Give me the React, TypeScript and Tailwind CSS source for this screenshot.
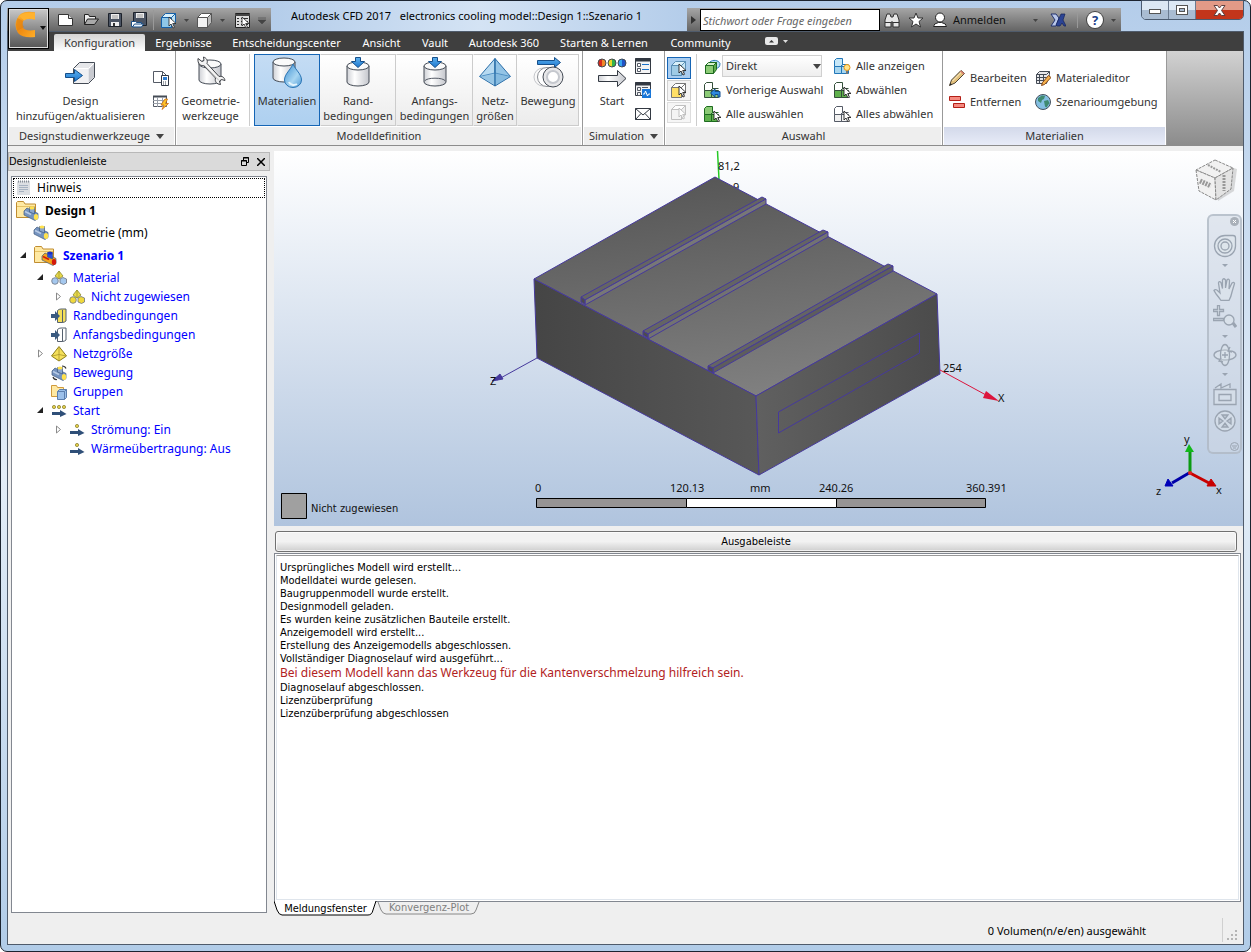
import { ReactNode, useState } from 'react';

type IconProps = { children: ReactNode; w?: number; h?: number };

function Icon({ children, w = 16, h = 16 }: IconProps) {
  return (
    <svg width={w} height={h} viewBox={`0 0 ${w} ${h}`} fill="none" aria-hidden="true" className="shrink-0">
      {children}
    </svg>
  );
}

function Caret({ className = 'text-[#444]' }: { className?: string }) {
  return (
    <svg width="8" height="5" viewBox="0 0 8 5" className={`shrink-0 ${className}`} aria-hidden="true">
      <path d="M0 0h8L4 5z" fill="currentColor" />
    </svg>
  );
}

const cursor = 'M0 0v9l2-2 2 4 1.500-.7-1.800-3.800H7z';

/* ---------- Quick access icons ---------- */

const NewIcon = () => (
  <Icon w={18}>
    <path d="M1.500 2.500h10l4 4v7h-14z" fill="#fff" stroke="#333" />
    <path d="M11.500 2.500v4h4" fill="#ddd" stroke="#333" />
  </Icon>
);

const OpenIcon = () => (
  <Icon>
    <path d="M1.500 12.500v-10h4l1 2h6v3" fill="#eee" stroke="#222" />
    <path d="M1.500 12.500l3-5.500h11l-4 5.500z" fill="#aaa" stroke="#222" />
  </Icon>
);

const SaveIcon = () => (
  <Icon>
    <path d="M1.500 1.500h13v13h-13z" fill="#4b5463" stroke="#1d222b" />
    <path d="M4 2h8v5H4zM4 10h8v4H4z" fill="#eee" />
    <path d="M5 4h6M5 6h6" stroke="#999" />
    <path d="M6 11h2v3H6z" fill="#333" />
  </Icon>
);

const SaveAsIcon = () => (
  <Icon>
    <path d="M2.500.500h13v13h-13z" fill="#4b5463" stroke="#1d222b" />
    <path d="M5 1h8v5H5z" fill="#eee" />
    <path d="M6 3h6M6 5h6" stroke="#999" />
    <path d="M.500 14.500v-5h4l1 1h5v4z" fill="#fff" stroke="#1b4f86" />
    <path d="M1.500 15l2-3h9l-2 3z" fill="#e8f2fb" stroke="#1b4f86" />
  </Icon>
);

function CubeShape({ front, side, top, line }: { front: string; side: string; top: string; line: string }) {
  return (
    <g stroke={line} strokeLinejoin="round">
      <path d="M1.500 5.500h10v10h-10z" fill={front} />
      <path d="M1.500 5.500l4-4h10l-4 4z" fill={top} />
      <path d="M11.500 5.500l4-4v9l-4 5z" fill={side} />
    </g>
  );
}

const BlueCubeIcon = () => (
  <Icon w={17} h={17}>
    <CubeShape front="#8fc7e8" side="#bfe2f4" top="#d8f0fb" line="#1560a8" />
    <path d={cursor} transform="translate(9 5)" fill="#fff" stroke="#222" strokeWidth=".8" />
  </Icon>
);

const WhiteCubeIcon = () => (
  <Icon w={17} h={17}>
    <CubeShape front="#f2f2f2" side="#bbb" top="#fff" line="#555" />
  </Icon>
);

const TableCursorIcon = () => (
  <Icon w={17} h={17}>
    <path d="M1.500 1.500h14v14h-14z" fill="#ddd" stroke="#222" />
    <path d="M1 3h15" stroke="#444" strokeWidth="2" />
    <path d="M3 6.500h2M3 9.500h2M3 12.500h2M7 6.500h7M7 9.500h7M7 12.500h7" stroke="#333" />
    <path d={cursor} transform="translate(8 5)" fill="#fff" stroke="#222" strokeWidth=".8" />
  </Icon>
);

/* ---------- Ribbon: large icons ---------- */

function Cylinder({ x = 0, y = 0, w = 22, h = 24 }: { x?: number; y?: number; w?: number; h?: number }) {
  const r = w / 2;
  return (
    <g transform={`translate(${x} ${y})`} stroke="#444b55">
      <path d={`M0 4v${h - 8}a${r} 4 0 0 0 ${w} 0V4`} fill="url(#steel)" />
      <ellipse cx={r} cy="4" rx={r} ry="4" fill="#fafafa" />
    </g>
  );
}

const Gradients = () => (
  <svg width="0" height="0" className="absolute" aria-hidden="true">
    <defs>
      <linearGradient id="steel">
        <stop offset="0" stopColor="#cfd1d6" />
        <stop offset=".35" stopColor="#fff" />
        <stop offset="1" stopColor="#c4c6cc" />
      </linearGradient>
      <linearGradient id="arrowBlue" x1="0" y1="0" x2="0" y2="1">
        <stop offset="0" stopColor="#5fb2ee" />
        <stop offset="1" stopColor="#1b76cf" />
      </linearGradient>
      <linearGradient id="drop" x1="0" y1="0" x2="1" y2="1">
        <stop offset="0" stopColor="#3b8fd2" />
        <stop offset=".6" stopColor="#a9d6f2" />
        <stop offset="1" stopColor="#4d9ad6" />
      </linearGradient>
      <linearGradient id="amber" x1="0" y1="0" x2="1" y2="1">
        <stop offset="0" stopColor="#ffbe3c" />
        <stop offset=".5" stopColor="#f08c12" />
        <stop offset="1" stopColor="#ffae28" />
      </linearGradient>
    </defs>
  </svg>
);

const DesignIcon = () => (
  <Icon w={32} h={32}>
    <path d="M8.500 12.500l6-6h15v15l-6 6h-15z" fill="#e6e7ea" stroke="#444b55" />
    <path d="M9 13h14v14H9z" fill="#f1f1f3" />
    <path d="M9 12.500h14.500l5.500-5.500" stroke="#fff" />
    <path d="M24 13l5-5v13l-5 5z" fill="#c8cad0" />
    <path d="M.500 17.500h9v-4l8 6-8 6v-4h-9z" fill="url(#arrowBlue)" stroke="#164f8a" />
  </Icon>
);

const WrenchIcon = () => (
  <Icon w={32} h={32}>
    <Cylinder x={4} y={4} />
    <path
      d="M3 2.500l4 3 2-1-.500-3.500c3 1 4.500 3.500 3.500 6.500l12 13c3-.8 5.500.8 6 4l-3.500-1-2 1.500 1 3.500c-3.800-.3-6-3-5-6.500l-12-12.500c-3.500.5-6-2-5.500-7z"
      fill="#f3f3f3"
      stroke="#3d4045"
    />
    <path d="M9 9l15 15.500" stroke="#bbb" />
  </Icon>
);

const MaterialIcon = () => (
  <Icon w={32} h={32}>
    <Cylinder x={2} y={2} />
    <path d="M22 8c-2.500 6-8.500 10-8.500 16a8.500 7.500 0 0 0 17 0c0-6-6-10-8.500-16z" fill="url(#drop)" stroke="#2a74b4" />
    <path d="M18 26a5 4 0 0 0 8 2" stroke="#e4f4fd" strokeWidth="2" />
  </Icon>
);

const BoundaryIcon = () => (
  <Icon w={32} h={32}>
    <Cylinder x={5} y={6} />
    <path d="M13.500 1.500h5v4h4L16 11.500l-6.500-6h4z" fill="url(#arrowBlue)" stroke="#164f8a" />
  </Icon>
);

const InitialIcon = () => (
  <Icon w={32} h={32}>
    <Cylinder x={5} y={6} />
    <path d="M5.500 25a11 4 0 0 1 21 0" stroke="#555b66" />
    <path d="M13.500 1.500h5v4h4L16 11.500l-6.500-6h4z" fill="url(#arrowBlue)" stroke="#164f8a" />
  </Icon>
);

const MeshIcon = () => (
  <Icon w={32} h={32}>
    <path d="M16 2.500L.500 20.500 16 30z" fill="#b7daf1" stroke="#2b6ea8" />
    <path d="M16 2.500l15.500 18L16 30z" fill="#93c4e6" stroke="#2b6ea8" />
    <path d="M.500 20.500L16 17l15.500 3.500" stroke="#4f90c4" />
    <path d="M1.500 20.500L16 18l14.500 2.500L16 29z" fill="#7ab2da" fillOpacity=".5" />
    <path d="M16 3v27" stroke="#2b6ea8" />
  </Icon>
);

const MotionIcon = () => (
  <Icon w={32} h={32}>
    <path d="M5.500 4.500h17v-3l6 5-6 5v-3h-17z" fill="url(#arrowBlue)" stroke="#164f8a" />
    <circle cx="11" cy="21" r="9" stroke="#c4c6ca" />
    <circle cx="15" cy="21" r="9.500" fill="#fff" stroke="#8b8e94" />
    <circle cx="21" cy="21" r="10" fill="#e8e8ea" stroke="#444b55" />
    <circle cx="21" cy="21" r="6" fill="#fff" stroke="#c5c8ce" strokeWidth="2" />
  </Icon>
);

const RunIcon = () => (
  <Icon w={32} h={32}>
    <path d="M6 3a4 4 0 0 0 0 8z" fill="#d92b1c" />
    <path d="M6 3a4 4 0 0 1 0 8z" fill="#f08a2a" />
    <path d="M16 3a4 4 0 0 0 0 8z" fill="#e8d829" />
    <path d="M16 3a4 4 0 0 1 0 8z" fill="#34b24c" />
    <path d="M26 3a4 4 0 0 0 0 8z" fill="#37a5ef" />
    <path d="M26 3a4 4 0 0 1 0 8z" fill="#2153c6" />
    <g stroke="#444b55">
      <circle cx="6" cy="7" r="4" />
      <circle cx="16" cy="7" r="4" />
      <circle cx="26" cy="7" r="4" />
    </g>
    <path d="M2.500 19.500h19v-5l8.500 8-8.500 8v-5h-19z" fill="url(#steel)" stroke="#333942" />
  </Icon>
);

/* ---------- Ribbon: small icons ---------- */

const CloneIcon = () => (
  <Icon>
    <path d="M.500 12.500v-11h9l4 4v7z" fill="#fff" stroke="#555b66" />
    <path d="M9.500 1.500v4h4" stroke="#555b66" />
    <path d="M8.500 5.500h7v10h-7z" fill="#fff" stroke="#2f3744" />
    <path d="M10 7h4v3h-4z" fill="#2f7dd1" />
    <path d="M10 12h4M10 14h4" stroke="#3b4452" strokeDasharray="1 1" />
  </Icon>
);

const TableBoltIcon = () => (
  <Icon>
    <path d="M.500 2.500h13v10h-13z" fill="#fff" stroke="#555b66" />
    <path d="M0 2.500h14" stroke="#444b55" strokeWidth="2" />
    <path d="M0 6.500h14M0 9.500h14M4.500 3v10M9.500 3v10" stroke="#999fa8" />
    <path d="M12 5l-4 6h3l-2 4.500 6.500-6h-3l2-4.500z" fill="#ffc629" stroke="#c96a13" strokeWidth=".8" />
  </Icon>
);

const ListIcon = () => (
  <Icon>
    <path d="M.500.500h15v15H.500z" fill="#f4f4f5" stroke="#333942" />
    <path d="M0 2h16" stroke="#333942" strokeWidth="3" />
    <path d="M2.500 5.500h3v3h-3zM2.500 10.500h3v3h-3z" fill="#fff" stroke="#555b66" />
    <path d="M7 6.500h7M7 11.500h7" stroke="#1d72c9" />
  </Icon>
);

const ListPlotIcon = () => (
  <Icon>
    <path d="M.500.500h15v13H.500z" fill="#f4f4f5" stroke="#333942" />
    <path d="M0 2h16" stroke="#333942" strokeWidth="3" />
    <path d="M2.500 5.500h3v3h-3zM2.500 10.500h3v3h-3zM7 5.500h6" stroke="#555b66" />
    <path d="M7 7h9v9H7z" fill="#1976d8" />
    <path d="M8 12h1.500l1-3 2 5 1-2H15" stroke="#fff" />
  </Icon>
);

const MailIcon = () => (
  <Icon>
    <path d="M.500 2.500h15v11H.500z" fill="#fff" stroke="#333942" />
    <path d="M.500 2.500L8 9l7.500-6.500M.500 13.500L6 7.500M15.500 13.500L10 7.500" stroke="#333942" />
  </Icon>
);

const PickIcon = ({ tone }: { tone: 'blue' | 'yellow' | 'grey' }) => {
  const tones = {
    blue: { front: '#9fcbe5', side: '#c8e6f5', top: '#d9f0fa', line: '#5b8fb5' },
    yellow: { front: '#ffdf66', side: '#fff', top: '#fff', line: '#777' },
    grey: { front: '#f4f4f4', side: '#efefef', top: '#fff', line: '#c0c0c0' },
  };
  return (
    <Icon w={18} h={17}>
      <CubeShape {...tones[tone]} />
      <path
        d={cursor}
        transform="translate(9 4)"
        fill="#fff"
        stroke={tone === 'grey' ? '#bbb' : '#222'}
        strokeWidth=".9"
      />
    </Icon>
  );
};

const DirectIcon = () => (
  <Icon w={17} h={17}>
    <path d="M6 4a6 5 0 0 1 10 1.500q0 5-5 5" fill="#b9dff5" stroke="#2a7ab8" />
    <path d="M1.500 7.500h8v8h-8z" fill="#8ccb76" stroke="#1d6b1f" />
    <path d="M1.500 7.500l3-3h8l-3 3z" fill="#d4efcb" stroke="#1d6b1f" />
    <path d="M9.500 7.500l3-3v7l-3 4z" fill="#5da94b" stroke="#1d6b1f" />
  </Icon>
);

type StackProps = { a: string; b: string; line: string; children?: ReactNode };

const StackIcon = ({ a, b, line, children }: StackProps) => (
  <Icon w={17}>
    <g stroke={line}>
      <path d="M.500 2.500l2-2h6v6l-2 2h-6z" fill={a} />
      <path d="M.500 8.500h7v7h-7zM7.500 8.500h7v7h-7z" fill={b} />
      <path d="M7.500 8.500l1-2h6" />
    </g>
    {children}
  </Icon>
);

const Pointer = () => <path d={cursor} transform="translate(10 5)" fill="#fff" stroke="#222" strokeWidth=".9" />;

const PrevIcon = () => (
  <StackIcon a="#fff" b="#8ccb76" line="#34503a">
    <path d="M6.500 11l4.500-4v2.500h5V15h-2v-2.500h-3V15z" fill="#2e8ade" stroke="#134f91" />
  </StackIcon>
);
const AllIcon = () => <StackIcon a="#8ccb76" b="#5fb14c" line="#1d6b1f"><Pointer /></StackIcon>;
const ShowIcon = () => (
  <StackIcon a="#c6e7f8" b="#a8d6ef" line="#2277b8">
    <circle cx="13" cy="9.500" r="3" fill="#ffe48a" stroke="#e89413" />
    <path d="M12 13h2v3h-2z" fill="#777" />
  </StackIcon>
);
const DeselectIcon = () => <StackIcon a="#fff" b="#5fb14c" line="#34503a"><Pointer /></StackIcon>;
const DeselectAllIcon = () => <StackIcon a="#fff" b="#f1f1f1" line="#555b66"><Pointer /></StackIcon>;

const PencilIcon = () => (
  <Icon>
    <path d="M.500 15.500l2-5.500L12 .500l3.500 3L6 13z" fill="#e2c07c" stroke="#4d4434" />
    <path d="M3.500 11L12.500 2" stroke="#fff1c9" />
    <path d="M11 1.500l3.500 3 1-1-3.500-3z" fill="#d97a6c" />
    <path d="M.500 15.500l1-2.500 1.500 1.500z" fill="#222" />
  </Icon>
);

const RemoveIcon = () => (
  <Icon>
    <path d="M.500 2.500h11v4H.500zM4.500 9.500h11v4h-11z" fill="#f58a80" stroke="#b31f17" />
  </Icon>
);

const MatEditorIcon = () => (
  <Icon>
    <path d="M1.500 4.500l3-3h10v3l-3 9h-10z" fill="#e9e9ec" stroke="#444b55" />
    <path d="M1.500 7.500h10M1.500 10.500h10M4.500 4.500v9M8.500 4.500v9M1.500 4.500h10l3-3" stroke="#444b55" />
    <path d="M6.500 15.500l1-3 6-7 2.500 2-6.500 7z" fill="#f4b14c" stroke="#86491b" />
  </Icon>
);

const GlobeIcon = () => (
  <Icon>
    <circle cx="8" cy="8" r="7.500" fill="#84bfe2" stroke="#45515e" />
    <path d="M3 4l4-2.500 3 .5-1 3-2 1-1 3-3-2zM9 7l4-1 1.500 3-3 4.500-1.500-1z" fill="#3f8a70" />
  </Icon>
);

/* ---------- Tree icons ---------- */

const NoteIcon = () => (
  <Icon w={15} h={17}>
    <path d="M2 1h12v14H1V2z" fill="#dcdfe3" />
    <path d="M2 1.500h12" stroke="#848b94" strokeWidth="2" strokeDasharray="1 1" />
    <path d="M3 5.500h9M3 7.500h9M3 9.500h9M3 11.500h5" stroke="#a7b3c2" />
  </Icon>
);

const Pipe = ({ hot = false }: { hot?: boolean }) => (
  <g>
    <path d="M1 5l3-3 11 5.500v5l-3 2L1 9z" fill={hot ? '#f2a51d' : '#7593bf'} stroke="#3f5a80" strokeWidth=".7" />
    <path d="M6.500 6V1.500h5V8z" fill={hot ? '#2a4ee0' : '#8aa5cc'} stroke="#3f5a80" strokeWidth=".7" />
    <ellipse cx="9" cy="2" rx="2.500" ry="1.500" fill={hot ? '#1d2fc4' : '#ffe14d'} />
    <ellipse cx="13" cy="11" rx="2.200" ry="3" fill={hot ? '#d3190d' : '#ffe14d'} />
    <path d="M2 5.500l6 3" stroke={hot ? '#d3190d' : '#b8cbe6'} strokeWidth="1.500" />
  </g>
);

const FolderIcon = ({ hot = false }: { hot?: boolean }) => (
  <Icon w={23} h={22}>
    <path d="M.500 17.500v-15l1-1h6l1.500 2.500h10.500v13.500z" fill="#ffe9a3" stroke="#c08d31" />
    <path d="M1 6.500h18" stroke="#e6c266" />
    <g transform="translate(7 6)">
      <Pipe hot={hot} />
    </g>
  </Icon>
);

const PipeIcon = () => <Icon><Pipe /></Icon>;

const MaterialTreeIcon = ({ yellow = false }: { yellow?: boolean }) => (
  <Icon>
    <path d="M8 1l-4 5 4 3 4-3z" fill="#e9d94a" stroke="#8d8a2a" strokeWidth=".8" />
    <path d="M8 1v8" stroke="#8d8a2a" strokeWidth=".6" />
    <circle cx="4" cy="11" r="3.300" fill={yellow ? '#f0d93c' : '#a5c8ee'} stroke="#6d7480" strokeWidth=".8" />
    <path d="M9 9l3-1.500L15.500 9v4l-3 1.500L9 13z" fill={yellow ? '#f0d93c' : '#a5c8ee'} stroke="#6d7480" strokeWidth=".8" />
  </Icon>
);

const ConditionIcon = ({ fill }: { fill: string }) => (
  <Icon>
    <path d="M6.500 2.500q1.500-1.500 3.500-1.500h5v12q-1.500 1.500-4 1.500H6.500z" fill={fill} stroke="#55606e" />
    <path d="M11.500 2v12" stroke="#55606e" />
    <path d="M0 6h4V3l5 5-5 5v-3H0z" fill="#3a5a80" />
  </Icon>
);

const MeshTreeIcon = () => (
  <Icon>
    <path d="M8 .500L.500 10 8 15l7.500-5z" fill="#f5e05a" stroke="#8a7c1c" />
    <path d="M8 1v14M1 10q7-3 14 0" stroke="#a8962a" strokeWidth=".8" />
  </Icon>
);

const MotionTreeIcon = () => (
  <Icon>
    <g transform="translate(0 1)">
      <Pipe />
    </g>
    <path d="M11 1q3 0 4 2.500M2 12q1 3 4 2.500" stroke="#333" strokeWidth="1.200" />
  </Icon>
);

const GroupIcon = () => (
  <Icon>
    <path d="M.500 12.500v-11h5l1 2h6v9z" fill="#ffe9a3" stroke="#d09a3c" />
    <path d="M6.500 7.500l2-2h7v8l-2 2h-7z" fill="#9cc0ea" stroke="#5d7fae" />
    <path d="M6.500 7.500h7l2-2M13.500 7.500v8" stroke="#5d7fae" />
  </Icon>
);

const StepIcon = ({ dots }: { dots: number[] }) => (
  <Icon>
    {dots.map((x) => (
      <circle key={x} cx={x} cy="4" r="1.600" fill="#e8d34a" stroke="#8a8132" strokeWidth=".8" />
    ))}
    <path d="M1 9h8V7l6.500 4-6.500 3v-2H1z" fill="#2f4f78" />
  </Icon>
);

/* ---------- Window chrome ---------- */

function QatButton({ label, children }: { label: string; children: ReactNode }) {
  return (
    <button aria-label={label} className="flex h-5 items-center justify-center">
      {children}
    </button>
  );
}

function TitleBar() {
  return (
    <div className="flex h-[31px] items-start text-[11px]">
      <div className="mt-[7px] flex h-6 shrink-0 items-center bg-linear-to-b from-[#a6a6a6] to-[#626262] pr-1 pl-[50px]">
        <div className="flex gap-2">
          <QatButton label="Neu"><NewIcon /></QatButton>
          <QatButton label="Öffnen"><OpenIcon /></QatButton>
          <QatButton label="Speichern"><SaveIcon /></QatButton>
          <QatButton label="Speichern unter"><SaveAsIcon /></QatButton>
        </div>
        <span className="mx-[6px] h-5 w-px bg-[#999]" />
        <QatButton label="Volumenauswahl"><BlueCubeIcon /></QatButton>
        <span className="w-[19px] pl-[7px]"><svg width="5" height="3"><path d="M0 0h5L2.500 3z" fill="#444" /></svg></span>
        <QatButton label="Ansichtsmodus"><WhiteCubeIcon /></QatButton>
        <span className="w-[21px] pl-[7px]"><svg width="5" height="3"><path d="M0 0h5L2.500 3z" fill="#444" /></svg></span>
        <QatButton label="Tabelle"><TableCursorIcon /></QatButton>
        <span className="w-4 pl-[7px]">
          <svg width="8" height="7"><path d="M0 1h8M0 3h8L4 7z" fill="#444" stroke="#444" strokeWidth=".6" /></svg>
        </span>
      </div>
      <div className="flex h-[30px] min-w-0 flex-1 items-center bg-linear-to-r from-[#b4cdea] via-[#d4e3f4] to-[#b4cdea] pl-5 text-black">
        <span className="truncate whitespace-pre">Autodesk CFD 2017   electronics cooling model::Design 1::Szenario 1</span>
      </div>
      <div className="mt-[7px] flex h-6 w-[434px] shrink-0 items-center bg-linear-to-b from-[#a6a6a6] to-[#626262] text-[#111]">
        <span className="flex w-[13px] justify-center">
          <svg width="5" height="8"><path d="M0 0v8l5-4z" fill="#333" /></svg>
        </span>
        <input
          aria-label="Suche"
          placeholder="Stichwort oder Frage eingeben"
          className="h-[22px] w-[180px] border border-black bg-white px-[2px] text-[11px] italic placeholder:text-[#666]"
        />
        <div className="flex flex-1 items-center pl-1">
          <button aria-label="Suchen" className="w-6">
            <Icon>
              <path d="M1 15V8l2-6h3l1 3h2l1-3h3l2 6v7H9v-5H7v5z" fill="#e6e6e6" stroke="#333" />
              <path d="M1 10.500h6M9 10.500h6" stroke="#333" />
            </Icon>
          </button>
          <button aria-label="Favoriten" className="w-6">
            <Icon><path d="M8 1l2 5h5l-4 3.500 1.500 5.500L8 12l-4.500 3L5 9.500 1 6h5z" fill="#fff" stroke="#333" /></Icon>
          </button>
          <button className="flex items-center gap-[5px]">
            <Icon>
              <circle cx="8" cy="5.500" r="4.500" fill="#fff" stroke="#222" />
              <path d="M1.500 14.500q0-3 5-4h3q5 1 5 4z" fill="#fff" stroke="#222" />
            </Icon>
            Anmelden
          </button>
          <svg width="5" height="3" className="mr-3 ml-auto"><path d="M0 0h5L2.500 3z" fill="#444" /></svg>
          <button aria-label="Exchange" className="mr-[11px]">
            <Icon>
              <path d="M1 2h5l3 4-3 8H1l4-6z" fill="#b9c7ea" stroke="#23336e" />
              <path d="M15 2h-4L6 13l1 1h3l2-3 2 3h2l-3-6z" fill="#2c4494" stroke="#16225a" strokeWidth=".7" />
            </Icon>
          </button>
          <span className="h-4 w-px bg-[#999]" />
          <button aria-label="Hilfe" className="ml-[9px] flex size-4 items-center justify-center rounded-full bg-white text-[13px] leading-none font-bold text-[#1b3f8a] ring-1 ring-[#444]">
            ?
          </button>
          <svg width="5" height="3" className="mr-[5px] ml-2"><path d="M0 0h5L2.500 3z" fill="#444" /></svg>
        </div>
      </div>
      <div className="-mt-px ml-5 flex h-5 w-[103px] shrink-0 overflow-hidden rounded-b-[5px] border border-[#4b5b70]">
        <button aria-label="Minimieren" className="flex flex-1 items-end justify-center border-r border-[#6b7b90] bg-linear-to-b from-[#dce8f4] from-50% to-[#a9bcd2] to-50% pb-[5px]">
          <span className="h-[5px] w-3 border border-[#555] bg-white" />
        </button>
        <button aria-label="Maximieren" className="flex flex-1 items-center justify-center border-r border-[#6b7b90] bg-linear-to-b from-[#dce8f4] from-50% to-[#a9bcd2] to-50%">
          <span className="flex h-[10px] w-3 items-center justify-center border border-[#555] bg-white">
            <span className="h-1 w-[6px] border border-[#555] bg-[#a9bcd2]" />
          </span>
        </button>
        <button aria-label="Schließen" className="flex w-[47px] items-center justify-center bg-linear-to-b from-[#e29a87] from-50% to-[#c3351b] to-50%">
          <svg width="13" height="11" viewBox="0 0 13 11">
            <path d="M1 .500h3.500l2 2.500 2-2.500H12L8.500 5.500l3.500 5H8.500l-2-2.500-2 2.500H1l3.500-5z" fill="#fff" stroke="#5c4040" />
          </svg>
        </button>
      </div>
    </div>
  );
}

const menuTabs = [
  { label: 'Konfiguration', cls: 'w-[91px]' },
  { label: 'Ergebnisse', cls: 'w-[77px]' },
  { label: 'Entscheidungscenter', cls: 'w-[129px]' },
  { label: 'Ansicht', cls: 'w-[61px]' },
  { label: 'Vault', cls: 'w-[46px]' },
  { label: 'Autodesk 360', cls: 'w-[92px]' },
  { label: 'Starten & Lernen', cls: 'w-[108px]' },
  { label: 'Community', cls: 'w-[85px]' },
];

function MenuBar() {
  const [active, setActive] = useState('Konfiguration');
  return (
    <nav className="flex h-[19px] items-end bg-[#3f3f3f] pl-[46px] text-[11px] text-white">
      {menuTabs.map((t) => (
        <button
          key={t.label}
          onClick={() => setActive(t.label)}
          className={`h-[17px] shrink-0 text-center leading-[14px] whitespace-nowrap ${t.cls} ${
            active === t.label ? 'rounded-t-[2px] bg-linear-to-b from-[#d4d4d4] to-white text-[#333]' : ''
          }`}
        >
          {t.label}
        </button>
      ))}
      <button aria-label="Multifunktionsleiste minimieren" className="mb-[6px] ml-[22px] flex items-center gap-[5px]">
        <svg width="13" height="8">
          <rect width="13" height="8" rx="2" fill="#e8e8e8" />
          <path d="M4 5.500h5L6.500 3z" fill="#333" />
        </svg>
        <svg width="5" height="3"><path d="M0 0h5L2.500 3z" fill="#ddd" /></svg>
      </button>
    </nav>
  );
}

function AppButton() {
  return (
    <button
      aria-label="Anwendungsmenü"
      className="absolute top-[7px] left-[7px] z-10 flex h-[41px] w-[41px] items-start gap-1 border border-black bg-linear-to-b from-[#c9c9c9] to-[#555] pt-[2px] pl-[6px] ring-1 ring-[#ddd] ring-inset"
    >
      <svg width="21" height="27" viewBox="0 0 21 27" className="shrink-0">
        <path d="M20 1.500v7q-10-2-12 2-2 6 2 8 4 1.500 10 .500v7Q8 27.500 3 22-1 16 1.500 9 5-1.500 20 1.500z" fill="url(#amber)" />
        <path d="M20 8.500q-8-2-11 1L4 5q6-5 16-3.500z" fill="#ffb22e" />
        <path d="M8 10l-5.500-3q-3 7 0 13L9 16q-2-3-1-6z" fill="#e07d0c" fillOpacity=".6" />
      </svg>
      <svg width="6" height="4" className="mt-[15px] shrink-0"><path d="M0 0h6L3 4z" fill="#111" /></svg>
    </button>
  );
}

/* ---------- Ribbon ---------- */

type PanelProps = { title: string; menu?: boolean; cls: string; footCls?: string; children: ReactNode };

function Panel({ title, menu, cls, footCls = 'bg-[#eee]', children }: PanelProps) {
  return (
    <section className={`flex shrink-0 flex-col border-r border-[#999] bg-white ${cls}`}>
      <div className="flex h-[76px] pt-[3px]">{children}</div>
      <div className={`mx-px flex h-[18px] items-center justify-center gap-[6px] ${footCls}`}>
        <span>{title}</span>
        {menu && <Caret />}
      </div>
    </section>
  );
}

type BigProps = { icon: ReactNode; lines: string[]; cls: string; onClick?: () => void };

function BigButton({ icon, lines, cls, onClick }: BigProps) {
  return (
    <button
      onClick={onClick}
      className={`flex h-[72px] shrink-0 flex-col items-center gap-[5px] border pt-px leading-[15px] whitespace-nowrap ${cls}`}
    >
      {icon}
      <span>
        {lines.map((l) => (
          <span key={l} className="block">{l}</span>
        ))}
      </span>
    </button>
  );
}

const modelButtons = [
  { lines: ['Materialien'], icon: <MaterialIcon />, w: 'w-[66px]' },
  { lines: ['Rand-', 'bedingungen'], icon: <BoundaryIcon />, w: 'w-[76px]' },
  { lines: ['Anfangs-', 'bedingungen'], icon: <InitialIcon />, w: 'w-[77px]' },
  { lines: ['Netz-', 'größen'], icon: <MeshIcon />, w: 'w-[44px]' },
  { lines: ['Bewegung'], icon: <MotionIcon />, w: 'w-[62px]' },
];

function SmallButton({ icon, label }: { icon: ReactNode; label: string }) {
  return (
    <button className="flex h-6 items-center gap-[5px] whitespace-nowrap">
      {icon}
      {label}
    </button>
  );
}

function Ribbon() {
  const [mode, setMode] = useState('Materialien');
  return (
    <div className="flex h-[95px] border-b border-[#8c8c8c] bg-white text-[11px] text-[#333]">
      <Panel title="Designstudienwerkzeuge" menu cls="w-[168px]">
        <BigButton icon={<DesignIcon />} lines={['Design', 'hinzufügen/aktualisieren']} cls="w-[145px] border-transparent" />
        <div className="flex flex-col gap-2 pt-4">
          <button aria-label="Klonen"><CloneIcon /></button>
          <button aria-label="Tabelle aktualisieren"><TableBoltIcon /></button>
        </div>
      </Panel>

      <Panel title="Modelldefinition" cls="w-[407px]">
        <BigButton icon={<WrenchIcon />} lines={['Geometrie-', 'werkzeuge']} cls="w-[69px] border-transparent" />
        <span className="mx-1 h-[72px] w-px shrink-0 bg-[#ccc]" />
        {modelButtons.map((b) => (
          <BigButton
            key={b.lines[0]}
            icon={b.icon}
            lines={b.lines}
            onClick={() => setMode(b.lines[0])}
            cls={`${b.w} ${
              mode === b.lines[0]
                ? 'border-[#1565b5] bg-linear-to-b from-[#c4dcf4] to-[#aed0f0]'
                : 'border-[#ccc] border-l-transparent bg-linear-to-b from-white to-[#ececec]'
            }`}
          />
        ))}
      </Panel>

      <Panel title="Simulation" menu cls="w-[82px]">
        <BigButton icon={<RunIcon />} lines={['Start']} cls="w-[52px] border-transparent pl-[6px]" />
        <div className="flex flex-col gap-2 pt-1">
          <button aria-label="Auftragsliste"><ListIcon /></button>
          <button aria-label="Verlauf"><ListPlotIcon /></button>
          <button aria-label="Benachrichtigung"><MailIcon /></button>
        </div>
      </Panel>

      <Panel title="Auswahl" cls="w-[278px]">
        <div className="ml-[2px] flex flex-col gap-px pt-[3px]">
          <button aria-label="Volumen" className="flex h-[22px] w-6 items-center justify-center border border-[#1565b5] bg-[#a9cdf0]">
            <PickIcon tone="blue" />
          </button>
          <button aria-label="Fläche" className="flex h-[21px] w-6 items-center justify-center border border-[#d0d0d0] bg-[#f4f4f4]">
            <PickIcon tone="yellow" />
          </button>
          <button aria-label="Kante" disabled className="flex h-[21px] w-6 items-center justify-center border border-[#ddd] bg-[#f6f6f6]">
            <PickIcon tone="grey" />
          </button>
        </div>
        <span className="mx-[5px] h-[72px] w-px bg-[#ccc]" />
        <div className="ml-[2px] w-[130px]">
          <div className="flex h-6 items-center gap-px">
            <DirectIcon />
            <div className="relative">
              <select aria-label="Auswahlmethode" className="h-[22px] w-[100px] appearance-none border border-[#d0d0d0] bg-linear-to-b from-white to-[#eee] pl-[3px]">
                <option>Direkt</option>
              </select>
              <span className="pointer-events-none absolute top-[9px] right-px"><Caret /></span>
            </div>
          </div>
          <SmallButton icon={<PrevIcon />} label="Vorherige Auswahl" />
          <SmallButton icon={<AllIcon />} label="Alle auswählen" />
        </div>
        <div>
          <SmallButton icon={<ShowIcon />} label="Alle anzeigen" />
          <SmallButton icon={<DeselectIcon />} label="Abwählen" />
          <SmallButton icon={<DeselectAllIcon />} label="Alles abwählen" />
        </div>
      </Panel>

      <Panel title="Materialien" cls="w-[224px]" footCls="bg-linear-to-b from-[#d3d9ea] to-[#e8ecf8]">
        <div className="w-[86px] pt-3 pl-[6px]">
          <SmallButton icon={<PencilIcon />} label="Bearbeiten" />
          <SmallButton icon={<RemoveIcon />} label="Entfernen" />
        </div>
        <div className="pt-3 pl-[6px]">
          <SmallButton icon={<MatEditorIcon />} label="Materialeditor" />
          <SmallButton icon={<GlobeIcon />} label="Szenarioumgebung" />
        </div>
      </Panel>
      <div className="flex-1 bg-linear-to-b from-[#d2d2d2] to-[#8c8c8c]" />
    </div>
  );
}

/* ---------- Design study tree ---------- */

type TreeItem = {
  label: string;
  icon: ReactNode;
  pad: string;
  arrow?: 'open' | 'closed' | 'none';
  row?: string;
  text?: string;
};

const treeItems: TreeItem[] = [
  { label: 'Hinweis', icon: <NoteIcon />, pad: 'pl-[2px]', row: 'h-[20px] mb-px mx-px border border-dotted border-black', text: 'text-black ml-1' },
  { label: 'Design 1', icon: <FolderIcon />, pad: 'pl-1', row: 'h-[24px]', text: 'font-bold text-black' },
  { label: 'Geometrie (mm)', icon: <PipeIcon />, pad: 'pl-[3px]', arrow: 'none', row: 'h-[20px]', text: 'text-black' },
  { label: 'Szenario 1', icon: <FolderIcon hot />, pad: 'pl-1', arrow: 'open', row: 'h-[25px]', text: 'font-bold' },
  { label: 'Material', icon: <MaterialTreeIcon />, pad: 'pl-[21px]', arrow: 'open' },
  { label: 'Nicht zugewiesen', icon: <MaterialTreeIcon yellow />, pad: 'pl-[39px]', arrow: 'closed' },
  { label: 'Randbedingungen', icon: <ConditionIcon fill="#f5e05a" />, pad: 'pl-[21px]', arrow: 'none' },
  { label: 'Anfangsbedingungen', icon: <ConditionIcon fill="#fff" />, pad: 'pl-[21px]', arrow: 'none' },
  { label: 'Netzgröße', icon: <MeshTreeIcon />, pad: 'pl-[21px]', arrow: 'closed' },
  { label: 'Bewegung', icon: <MotionTreeIcon />, pad: 'pl-[21px]', arrow: 'none' },
  { label: 'Gruppen', icon: <GroupIcon />, pad: 'pl-[21px]', arrow: 'none' },
  { label: 'Start', icon: <StepIcon dots={[3, 8, 13]} />, pad: 'pl-[21px]', arrow: 'open' },
  { label: 'Strömung: Ein', icon: <StepIcon dots={[8]} />, pad: 'pl-[39px]', arrow: 'closed' },
  { label: 'Wärmeübertragung: Aus', icon: <StepIcon dots={[8]} />, pad: 'pl-[39px]', arrow: 'none' },
];

function StudyBar() {
  return (
    <aside className="flex w-[262px] shrink-0 flex-col">
      <div className="mt-[6px] flex h-[19px] items-center border border-[#b8b8b8] bg-[#dadada] pr-1 font-['DejaVu_Sans_Condensed','Tahoma',sans-serif] text-[11px] text-black">
        <span className="flex-1 pt-px">Designstudienleiste</span>
        <button aria-label="Lösen" className="mr-2">
          <svg width="8" height="9" viewBox="0 0 8 9" fill="none" stroke="#000">
            <path d="M2.500 3V.500h5v5H6M2 1h6" />
            <path d="M.500 3.500h5v5h-5zM0 4h6" />
          </svg>
        </button>
        <button aria-label="Schließen">
          <svg width="8" height="8" stroke="#000" strokeWidth="1.500"><path d="M0 0l8 8M8 0L0 8" /></svg>
        </button>
      </div>
      <ul className="mt-[5px] mr-[3px] mb-[31px] ml-[3px] flex-1 border border-[#828790] bg-white pt-px text-[12px] text-[#0000ff]">
        {treeItems.map((t) => (
          <li key={t.label} className={`flex items-center whitespace-nowrap ${t.pad} ${t.row ?? 'h-[19px]'}`}>
            {t.arrow && (
              <span className="flex w-[18px] items-center pl-1">
                {t.arrow === 'open' && <svg width="7" height="7"><path d="M6 0v6H0z" fill="#222" /></svg>}
                {t.arrow === 'closed' && (
                  <svg width="7" height="9" fill="#fff" stroke="#8a8a8a"><path d="M1.500 1v7l4-3.500z" /></svg>
                )}
              </span>
            )}
            {t.icon}
            <span className={`ml-[6px] ${t.text ?? ''}`}>{t.label}</span>
          </li>
        ))}
      </ul>
    </aside>
  );
}

/* ---------- 3D view ---------- */

const ribs = [
  { top: '581,297 762,197 766,199 585,300', side: '585,300 766,199 766,204 585,305', end: '581,297 585,300 585,304 581,302', fill: '#777' },
  { top: '643,331 823,230 828,232 648,334', side: '648,334 828,232 828,237 648,339', end: '643,331 648,334 648,338 643,335', fill: '#727272' },
  { top: '708,366 888,264 893,266 713,368', side: '713,368 893,266 893,271 713,373', end: '708,366 713,368 713,373 708,370', fill: '#5d5d5d' },
];

function Scene() {
  return (
    <svg viewBox="274 151 969 375" className="block h-[375px] w-full" role="img" aria-label="3D-Modell">
      <defs>
        <linearGradient id="faceTop" x1=".3" y1="0" x2=".55" y2="1">
          <stop offset="0" stopColor="#565656" />
          <stop offset="1" stopColor="#808080" />
        </linearGradient>
        <linearGradient id="faceLeft">
          <stop offset="0" stopColor="#454545" />
          <stop offset="1" stopColor="#585858" />
        </linearGradient>
        <linearGradient id="faceRight">
          <stop offset="0" stopColor="#606060" />
          <stop offset="1" stopColor="#4b4b4b" />
        </linearGradient>
      </defs>
      <g fontSize="11" fill="#111">
        <path d="M717.500 151l1.500 28" stroke="#26c926" strokeWidth="1.500" />
        <text x="718" y="170">81,2</text>
        <text x="730" y="191">.9</text>
      </g>
      <g stroke="#46399c" strokeLinejoin="round">
        <path d="M537 358l-40 22" />
        <path d="M492 381l8-7 3 5z" fill="#46399c" />
        <path d="M715 177l222 117-181 102-222-117z" fill="url(#faceTop)" />
        <path d="M534 279l222 117 3 79-222-117z" fill="url(#faceLeft)" />
        <path d="M756 396l181-102 3 80-181 101z" fill="url(#faceRight)" />
        <path d="M778.500 412L919.500 333v20l-141 80z" fill="none" />
        {ribs.map((r) => (
          <g key={r.top}>
            <polygon points={r.top} fill="#646464" />
            <polygon points={r.side} fill={r.fill} />
            <polygon points={r.end} fill="#4c4c4c" />
          </g>
        ))}
      </g>
      <path d="M940 370l46 25" stroke="#dc143c" />
      <path d="M999 401l-16-3 3-7z" fill="#dc143c" />
      <g fontSize="11" fill="#111">
        <text x="943" y="372">254</text>
        <text x="998" y="402">X</text>
        <text x="490" y="385">Z</text>
      </g>

      {/* ruler */}
      <g stroke="#000">
        <path d="M536.500 498.500h150v9h-150zM836.500 498.500h149v9h-149z" fill="#969494" />
        <path d="M686.500 498.500h150v9h-150z" fill="#fff" />
      </g>
      <g fontSize="11" fill="#111">
        <text x="535" y="492">0</text>
        <text x="670" y="492">120.13</text>
        <text x="750" y="492">mm</text>
        <text x="819" y="492">240.26</text>
        <text x="966" y="492">360.391</text>
      </g>

      {/* legend */}
      <path d="M281.500 493.500h25v25h-25z" fill="#a0a0a0" stroke="#000" />
      <text x="311" y="512" fontSize="11" fill="#111" className="font-['DejaVu_Sans_Condensed','Tahoma',sans-serif]">
        Nicht zugewiesen
      </text>

      {/* axis triad */}
      <path d="M1190 473v-21" stroke="#0b9b12" strokeWidth="3" />
      <path d="M1189 444l5 8h-9z" fill="#12b81b" />
      <path d="M1189 473l-17 10" stroke="#0000a8" strokeWidth="3" />
      <path d="M1165 486l3-7 5 7z" fill="#0000b8" stroke="#0000b8" />
      <path d="M1190 473l19 10" stroke="#c80000" strokeWidth="3" />
      <path d="M1216 486l-9 0 4-7z" fill="#c80000" stroke="#c80000" />
      <circle cx="1190" cy="473" r="2" fill="#e02020" />
      <g fontSize="11" fill="#111">
        <text x="1184" y="443">y</text>
        <text x="1216" y="494">x</text>
        <text x="1156" y="495">z</text>
      </g>

      {/* view cube */}
      <path d="M1217 163l20 6-3 22-16 10z" fill="#999" fillOpacity=".35" />
      <g stroke="#888" strokeDasharray="3 1" fill="#f1f1f1">
        <path d="M1215 160l18 8-18 10-19-8z" />
        <path d="M1196 170l19 8 1 22-17-9z" />
        <path d="M1215 178l18-10-2 21-15 11z" fill="#e3e3e3" />
      </g>
      <g stroke="#999" strokeWidth="2" strokeDasharray="2 1">
        <path d="M1200 181l11 5" strokeWidth="5" />
        <path d="M1224 175v16" strokeWidth="3" />
        <path d="M1208 165l13 7" />
      </g>
    </svg>
  );
}

const navIcons = [
  {
    label: 'Navigationsrad',
    h: 'h-[43px]',
    caret: true,
    draw: (
      <g>
        <path d="M12 1.500h8q2.500 0 2.500 2.500V12A10.500 10.500 0 1 1 12 1.500z" />
        <circle cx="12" cy="12" r="7" />
        <circle cx="12" cy="12" r="4" />
      </g>
    ),
  },
  {
    label: 'Pan',
    h: 'h-[28px]',
    draw: (
      <path d="M8 23.500q-2-3-4.500-6L1 13.500q1.500-2 4 .500l2 2L5.500 6q.5-2.500 2.500-.500l1.500 6V3q1-2.500 3 0v8l1.500-8q1.500-2 2.500.500L16 12l3-6q2-1.500 2.500.500L19 15q-1 5-3 8.500z" />
    ),
  },
  {
    label: 'Zoom',
    h: 'h-[38px]',
    caret: true,
    draw: (
      <g>
        <path d="M4.500.500h2v4h4v2h-4v4h-2v-4h-4v-2h4zM.500 13.500h10v2H.500z" />
        <circle cx="16" cy="15" r="5" />
        <path d="M20 18l3 4" strokeWidth="3" />
      </g>
    ),
  },
  {
    label: 'Orbit',
    h: 'h-[39px]',
    caret: true,
    draw: (
      <g>
        <ellipse cx="12" cy="12" rx="11" ry="5" />
        <ellipse cx="12" cy="12" rx="4.500" ry="10.500" />
        <path d="M12 9v6M9 12h6M17 4l-2 4 4 1M8 15l-2 3 4 1" />
      </g>
    ),
  },
  {
    label: 'Kamera',
    h: 'h-[27px]',
    draw: (
      <g>
        <path d="M1 7.500h22v15H1zM6 12.500h12v6H6z" />
        <path d="M2 6l6-4v4l9-4v4" />
      </g>
    ),
  },
  {
    label: 'Ansicht zentrieren',
    h: 'h-[26px]',
    draw: (
      <g>
        <circle cx="12" cy="12" r="10" />
        <path d="M9 6h6l-3 4zM9 18h6l-3-4zM6 9v6l4-3zM18 9v6l-4-3z" fill="#9aa4b1" />
      </g>
    ),
  },
];

function NavBar() {
  return (
    <div className="absolute top-[63px] right-px flex h-[240px] w-[35px] flex-col items-center rounded-[6px] border-2 border-[#a9b3bf]/70 bg-[#cfd8e3]/50 text-[#9aa4b1]">
      <button aria-label="Navigationsleiste schließen" className="mb-[7px] self-end p-px">
        <svg width="9" height="9" className="block"><circle cx="4.500" cy="4.500" r="4.500" fill="#a9b0b9" /><path d="M3 3l3 3M6 3L3 6" stroke="#fff" /></svg>
      </button>
      {navIcons.map((n) => (
        <button key={n.label} aria-label={n.label} className={`flex shrink-0 flex-col items-center gap-[6px] ${n.h}`}>
          <svg width="24" height="24" viewBox="0 0 24 24" fill="#dfe5ec" fillOpacity=".4" stroke="currentColor" strokeWidth="1.300" className="shrink-0">
            {n.draw}
          </svg>
          {n.caret && <svg width="6" height="3" className="shrink-0"><path d="M0 0h6L3 3z" fill="currentColor" /></svg>}
        </button>
      ))}
      <button aria-label="Optionen" className="mt-auto self-end p-px">
        <svg width="9" height="9" fill="none" stroke="currentColor" className="block"><circle cx="4.500" cy="4.500" r="4" /><path d="M2 4h5M3 6h3" /></svg>
      </button>
    </div>
  );
}

/* ---------- Output ---------- */

const logLines = [
  { text: 'Ursprüngliches Modell wird erstellt...' },
  { text: 'Modelldatei wurde gelesen.' },
  { text: 'Baugruppenmodell wurde erstellt.' },
  { text: 'Designmodell geladen.' },
  { text: 'Es wurden keine zusätzlichen Bauteile erstellt.' },
  { text: 'Anzeigemodell wird erstellt...' },
  { text: 'Erstellung des Anzeigemodells abgeschlossen.' },
  { text: 'Vollständiger Diagnoselauf wird ausgeführt...' },
  { text: 'Bei diesem Modell kann das Werkzeug für die Kantenverschmelzung hilfreich sein.', warn: true },
  { text: 'Diagnoselauf abgeschlossen.' },
  { text: 'Lizenzüberprüfung' },
  { text: 'Lizenzüberprüfung abgeschlossen' },
];

function OutputBar() {
  return (
    <div className="flex flex-1 flex-col font-['DejaVu_Sans_Condensed','Tahoma',sans-serif] text-[11px] text-black">
      <button className="mt-[5px] mr-[6px] ml-px h-[21px] rounded-[3px] border border-[#707070] bg-linear-to-b from-[#f2f2f2] from-50% to-[#cfcfcf] leading-[19px] ring-1 ring-white/70 ring-inset">
        Ausgabeleiste
      </button>
      <div className="mt-px mr-[2px] flex flex-1 border border-[#828790] bg-white p-px">
        <div className="flex-1 border border-[#dfe5ec] border-t-[#999] px-[3px] pt-[5px]">
          {logLines.map((l) => (
            <p
              key={l.text}
              className={l.warn ? "font-['Noto_Sans',sans-serif] text-[12px] leading-4 text-[#b22222]" : 'leading-[13px]'}
            >
              {l.text}
            </p>
          ))}
        </div>
      </div>
      <div className="-mt-px flex h-[15px]">
        <button className="relative flex h-[15px] w-[103px] items-center justify-center">
          <svg width="103" height="15" className="absolute inset-0" aria-hidden="true">
            <path d="M0 0l3 9q2 5 5 5h86q4 0 5-5l3-9" fill="#fff" stroke="#000" />
          </svg>
          <span className="relative pt-[2px]">Meldungsfenster</span>
        </button>
        <button className="relative flex h-[14px] w-[104px] items-center justify-center text-[#808080]">
          <svg width="104" height="14" className="absolute inset-0" aria-hidden="true">
            <path d="M1 1l3 8q2 4 5 4h85q4 0 5-4l3-8" fill="#efefef" stroke="#888" />
          </svg>
          <span className="relative pt-px">Konvergenz-Plot</span>
        </button>
      </div>
    </div>
  );
}

export default function App() {
  return (
    <div className="relative flex min-h-screen flex-col rounded-[7px] border border-[#1c2430] bg-linear-to-b from-[#b4cdea] from-32px via-[#e3edf7] via-258px to-[#b1cce8] to-260px px-[6px] pb-[6px] font-['Noto_Sans','Segoe_UI',sans-serif]">
      <Gradients />
      <AppButton />
      <div className="-mb-px">
        <TitleBar />
      </div>
      <div className="flex flex-1 flex-col border border-[#4f5b6b] bg-[#efefef]">
        <MenuBar />
        <Ribbon />
        <div className="flex flex-1">
          <StudyBar />
          <div className="mt-[5px] ml-1 flex min-w-0 flex-1 flex-col">
            <div className="relative bg-linear-to-b from-white to-[#b0c4de]">
              <Scene />
              <NavBar />
            </div>
            <OutputBar />
            <footer className="flex h-7 items-center justify-end text-[11px] text-black">
              <span className="pt-[2px]">0 Volumen(n/e/en) ausgewählt</span>
              <span className="ml-[76px] h-6 w-px bg-[#d0d0d0]" />
              <svg width="12" height="12" className="mt-3 mr-1 ml-1" fill="#b5b5b5">
                <path d="M8 0h2v2H8zM4 4h2v2H4zM8 4h2v2H8zM0 8h2v2H0zM4 8h2v2H4zM8 8h2v2H8z" />
              </svg>
            </footer>
          </div>
        </div>
      </div>
    </div>
  );
}
